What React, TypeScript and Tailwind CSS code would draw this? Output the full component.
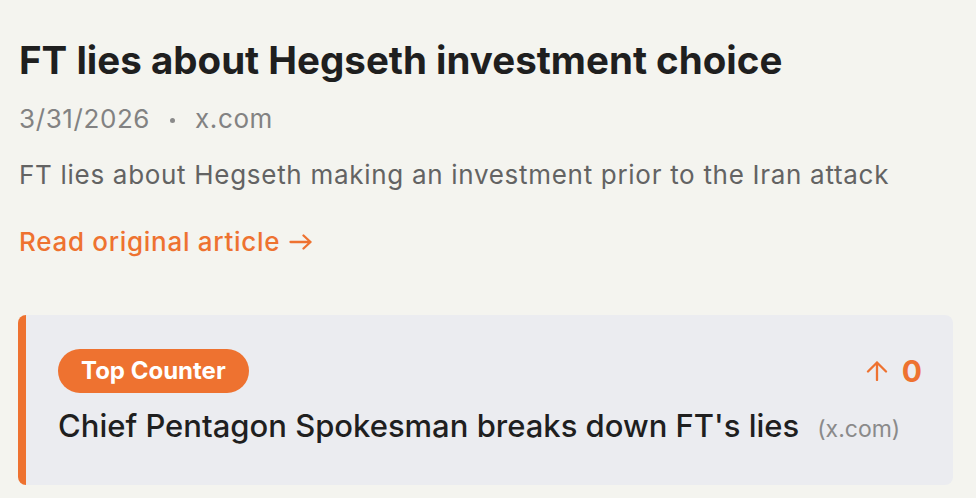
// Article detail: headline, meta, summary, link, and the top counter card.
export default function App() {
  return (
    <div
      className="min-h-screen bg-[#f4f4ef] pl-[18px] pr-[23px] pt-[37px]"
      style={{ fontFamily: 'Inter, "Noto Sans", sans-serif' }}
    >
      <h1 className="pl-px text-[38.5px] font-bold leading-[46px] text-[#1f1f1f]">
        FT lies about Hegseth investment choice
      </h1>

      <div className="mt-[20px] flex items-center pl-px text-[26px] leading-[32px] tracking-[0.6px] text-[#828282]">
        <span>3/31/2026</span>
        <span className="mx-[20px] mt-[3px] h-[5px] w-[5px] rounded-full bg-[#8a8a8a]" />
        <span>x.com</span>
      </div>

      <p className="mt-[24px] pl-px text-[26px] leading-[32px] tracking-[0.7px] text-[#636363]">
        FT lies about Hegseth making an investment prior to the Iran attack
      </p>

      <a
        href="#"
        className="mt-[35px] flex w-fit items-center gap-[9px] pl-px text-[26px] font-medium leading-[32px] tracking-[0.7px] text-[#ee7230]"
      >
        Read original article
        <svg width="23" height="16" viewBox="0 0 23 16" fill="none" stroke="currentColor" strokeWidth="2.3" strokeLinecap="round" strokeLinejoin="round">
          <path d="M1.5 8h20M14.5 1.5 21.5 8l-7 6.5" />
        </svg>
      </a>

      <div className="mt-[57px] rounded-lg border-l-[8px] border-[#ee7230] bg-[#ebecf0] pb-[38px] pl-[32px] pr-[31px] pt-[34px]">
        <div className="flex items-center justify-between">
          <span className="rounded-full bg-[#ee7230] px-[23px] py-[8px] text-[24px] font-bold leading-[28px] text-white">
            Top Counter
          </span>
          <span className="flex items-center gap-[14px] text-[#ee7230]">
            <svg width="22" height="20" viewBox="0 0 22 20" fill="none" stroke="currentColor" strokeWidth="2.3" strokeLinecap="round" strokeLinejoin="round">
              <path d="M11 19V1.5M2 10.5 11 1.5l9 9" />
            </svg>
            <span className="text-[30px] font-bold leading-[36px]">0</span>
          </span>
        </div>
        <div className="mt-[14px] flex items-baseline gap-[18px]">
          <span className="text-[31px] font-medium leading-[38px] text-[#1f1f1f]">
            Chief Pentagon Spokesman breaks down FT's lies
          </span>
          <span className="text-[23px] text-[#8a8a8a]">(x.com)</span>
        </div>
      </div>
    </div>
  );
}
